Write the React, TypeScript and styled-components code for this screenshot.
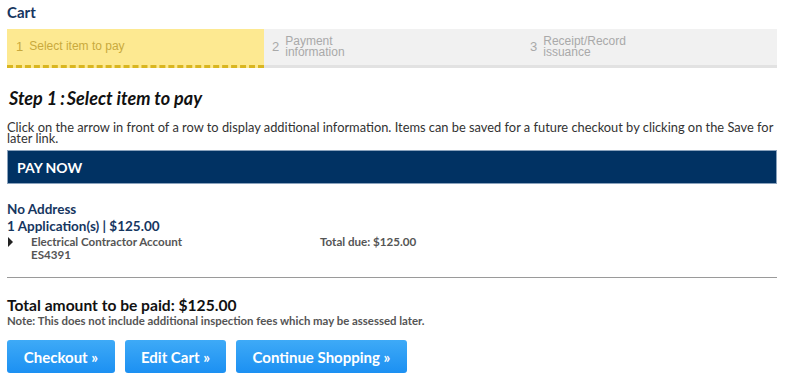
import React from 'react'
import styled, { createGlobalStyle } from 'styled-components'

const GlobalStyle = createGlobalStyle`
  html, body {
    margin: 0;
    padding: 0;
    background: #fff;
  }
  body {
    font-family: Lato, "Open Sans", sans-serif;
    color: #333;
  }
`

const Page = styled.div`
  width: 770px;
  padding: 3px 0 0 7px;
  display: flex;
  flex-direction: column;
`

const PageTitle = styled.div`
  font-size: 15px;
  font-weight: 700;
  color: #16365f;
  height: 26px;
`

const Steps = styled.div`
  display: flex;
  height: 36px;
  background: #f1f1f1;
  border-bottom: 3px solid #e2e2e2;
`

const Step = styled.div<{ $active?: boolean; $width: number }>`
  display: flex;
  align-items: center;
  gap: 6px;
  width: ${p => p.$width}px;
  padding-left: ${p => (p.$active ? 9 : 8)}px;
  box-sizing: border-box;
  font-family: "Liberation Sans", Arial, sans-serif;
  font-size: 12px;
  line-height: 11.5px;
  color: ${p => (p.$active ? '#c9a93d' : '#a9a9a9')};
  background: ${p => (p.$active ? '#fde991' : 'transparent')};
  border-bottom: ${p => (p.$active ? '3px dashed #d9b620' : 'none')};
  margin-bottom: ${p => (p.$active ? -3 : 0)}px;
`

const StepNum = styled.span`
  font-size: 13px;
`

const StepTitle = styled.h2`
  margin: 19px 0 0 2px;
  font-size: 18px;
  font-style: italic;
  font-weight: 700;
  color: #111;
`

const Colon = styled.span`
  margin: 0 2px 0 3px;
`

const Intro = styled.p`
  margin: 13px 0 0 0;
  font-size: 12.85px;
  line-height: 11px;
  color: #333;
`

const PayBar = styled.div`
  margin-top: 6px;
  height: 32px;
  background: #013263;
  border: 1px solid #8aa2bc;
  display: flex;
  align-items: center;
  padding-left: 9px;
  color: #fff;
  font-size: 14px;
  font-weight: 700;
`

const Group = styled.div`
  margin-top: 17px;
  color: #16365f;
  font-weight: 700;
`

const GroupName = styled.div`
  font-size: 13.5px;
  line-height: 17px;
`

const GroupCount = styled.div`
  font-size: 13.5px;
  line-height: 17px;
`

const ItemRow = styled.div`
  display: grid;
  grid-template-columns: 24px 289px 1fr;
  font-size: 11.6px;
  font-weight: 700;
  color: #555;
  line-height: 13px;
`

const Arrow = styled.span`
  width: 0;
  height: 0;
  margin: 2px 0 0 1px;
  border-top: 5px solid transparent;
  border-bottom: 5px solid transparent;
  border-left: 5px solid #222;
`

const Divider = styled.hr`
  margin: 16px 0 0 0;
  border: none;
  border-top: 1px solid #9a9a9a;
`

const TotalLine = styled.div`
  margin-top: 18px;
  font-size: 15.6px;
  font-weight: 700;
  color: #111;
  line-height: 18px;
`

const Note = styled.div`
  font-size: 11.4px;
  font-weight: 700;
  color: #555;
  line-height: 14px;
`

const Actions = styled.div`
  display: flex;
  gap: 10px;
  margin-top: 12px;
`

const Button = styled.button<{ $width: number }>`
  width: ${p => p.$width}px;
  height: 33px;
  padding: 0;
  border: none;
  border-radius: 3px;
  background: linear-gradient(#3eaaf7, #1c90f2);
  color: #fff;
  font-family: Lato, "Open Sans", sans-serif;
  font-size: 15px;
  font-weight: 700;
  cursor: pointer;
`

const App = () => {
  return (
    <>
      <GlobalStyle />
      <Page>
        <PageTitle>Cart</PageTitle>
        <Steps>
          <Step $active $width={257}>
            <StepNum>1</StepNum>
            <span>Select item to pay</span>
          </Step>
          <Step $width={258}>
            <StepNum>2</StepNum>
            <span>
              Payment
              <br />
              information
            </span>
          </Step>
          <Step $width={200}>
            <StepNum>3</StepNum>
            <span>
              Receipt/Record
              <br />
              issuance
            </span>
          </Step>
        </Steps>
        <StepTitle>
          Step 1<Colon>:</Colon>Select item to pay
        </StepTitle>
        <Intro>
          Click on the arrow in front of a row to display additional information. Items can be saved for a
          future checkout by clicking on the Save for later link.
        </Intro>
        <PayBar>PAY NOW</PayBar>
        <Group>
          <GroupName>No Address</GroupName>
          <GroupCount>1 Application(s) | $125.00</GroupCount>
        </Group>
        <ItemRow>
          <Arrow />
          <div>
            Electrical Contractor Account
            <br />
            ES4391
          </div>
          <div>Total due: $125.00</div>
        </ItemRow>
        <Divider />
        <TotalLine>Total amount to be paid: $125.00</TotalLine>
        <Note>Note: This does not include additional inspection fees which may be assessed later.</Note>
        <Actions>
          <Button $width={108}>Checkout »</Button>
          <Button $width={101}>Edit Cart »</Button>
          <Button $width={171}>Continue Shopping »</Button>
        </Actions>
      </Page>
    </>
  )
}

export default App
